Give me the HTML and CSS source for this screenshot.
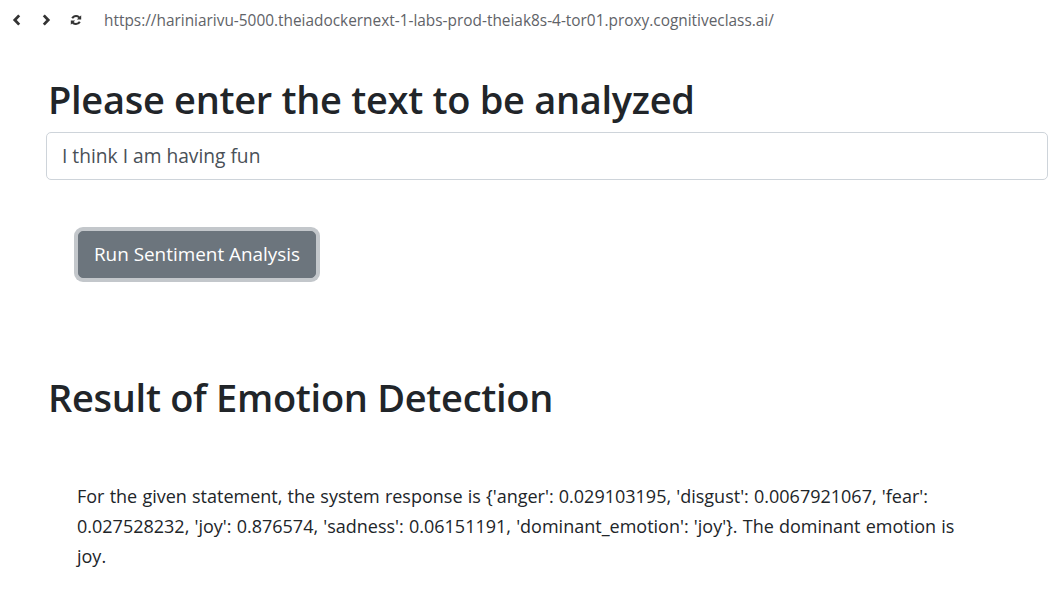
FILE: index.html
```html
<!DOCTYPE html>
<html>
<head>
<meta charset="utf-8">
<link rel="stylesheet" href="styles.css">
</head>
<body>
<div class="addressbar">
  <svg class="nav-icon" width="10" height="12" viewBox="0 0 10 12"><path d="M7.2 1.4 L2.8 6 L7.2 10.6" fill="none" stroke="#333" stroke-width="2.8" stroke-linejoin="miter"/></svg>
  <svg class="nav-icon" width="10" height="12" viewBox="0 0 10 12"><path d="M2.8 1.4 L7.2 6 L2.8 10.6" fill="none" stroke="#333" stroke-width="2.8" stroke-linejoin="miter"/></svg>
  <svg class="nav-icon reload" width="12" height="12" viewBox="0 0 12 12">
    <path d="M10 4.6 A4.3 4.3 0 0 0 2.2 4.3" fill="none" stroke="#333" stroke-width="2"/>
    <path d="M11.2 1.2 L11.2 5.6 L6.8 5.6 Z" fill="#333"/>
    <path d="M2 7.4 A4.3 4.3 0 0 0 9.8 7.7" fill="none" stroke="#333" stroke-width="2"/>
    <path d="M0.8 10.8 L0.8 6.4 L5.2 6.4 Z" fill="#333"/>
  </svg>
  <span class="url">https://hariniarivu-5000.theiadockernext-1-labs-prod-theiak8s-4-tor01.proxy.cognitiveclass.ai/</span>
</div>
<main class="page">
  <h1 class="title">Please enter the text to be analyzed</h1>
  <input class="text-input" type="text" value="I think I am having fun">
  <div class="action">
    <button class="btn">Run Sentiment Analysis</button>
  </div>
  <h1 class="title result-title">Result of Emotion Detection</h1>
  <p class="response">For the given statement, the system response is {'anger': 0.029103195, 'disgust': 0.0067921067, 'fear': 0.027528232, 'joy': 0.876574, 'sadness': 0.06151191, 'dominant_emotion': 'joy'}. The dominant emotion is joy.</p>
</main>
</body>
</html>
```
FILE: styles.css
```css
html, body {
  margin: 0;
  padding: 0;
  background: #fff;
}
body {
  font-family: "Open Sans", "Noto Sans", sans-serif;
  color: #212529;
}
.addressbar {
  display: flex;
  align-items: center;
  height: 40px;
  padding-left: 12px;
}
.nav-icon {
  margin-right: 19px;
}
.reload {
  margin-right: 22px;
}
.url {
  font-size: 15.4px;
  color: #5f6368;
}
.page {
  padding: 0 11px 0 46px;
}
.title {
  margin: 37px 0 9px 2px;
  font-size: 38px;
  font-weight: 600;
  line-height: 1.2;
  letter-spacing: -0.3px;
}
.text-input {
  display: block;
  box-sizing: border-box;
  width: 100%;
  height: 48px;
  padding: 0 15px;
  font-family: inherit;
  font-size: 19.2px;
  color: #495057;
  border: 1px solid #ced4da;
  border-radius: 5px;
  outline: none;
}
.action {
  padding: 51px 0 0 32px;
}
.btn {
  height: 47px;
  width: 238px;
  padding: 0;
  font-family: inherit;
  font-size: 18.9px;
  color: #fff;
  background: #6c757d;
  border: 1px solid #6c757d;
  border-radius: 5px;
  box-shadow: 0 0 0 4px #c3c7cb;
}
.result-title {
  margin-top: 97px;
}
.response {
  margin: 61px 78px 0 31px;
  font-size: 18px;
  line-height: 30px;
  word-spacing: 0.5px;
}
```
